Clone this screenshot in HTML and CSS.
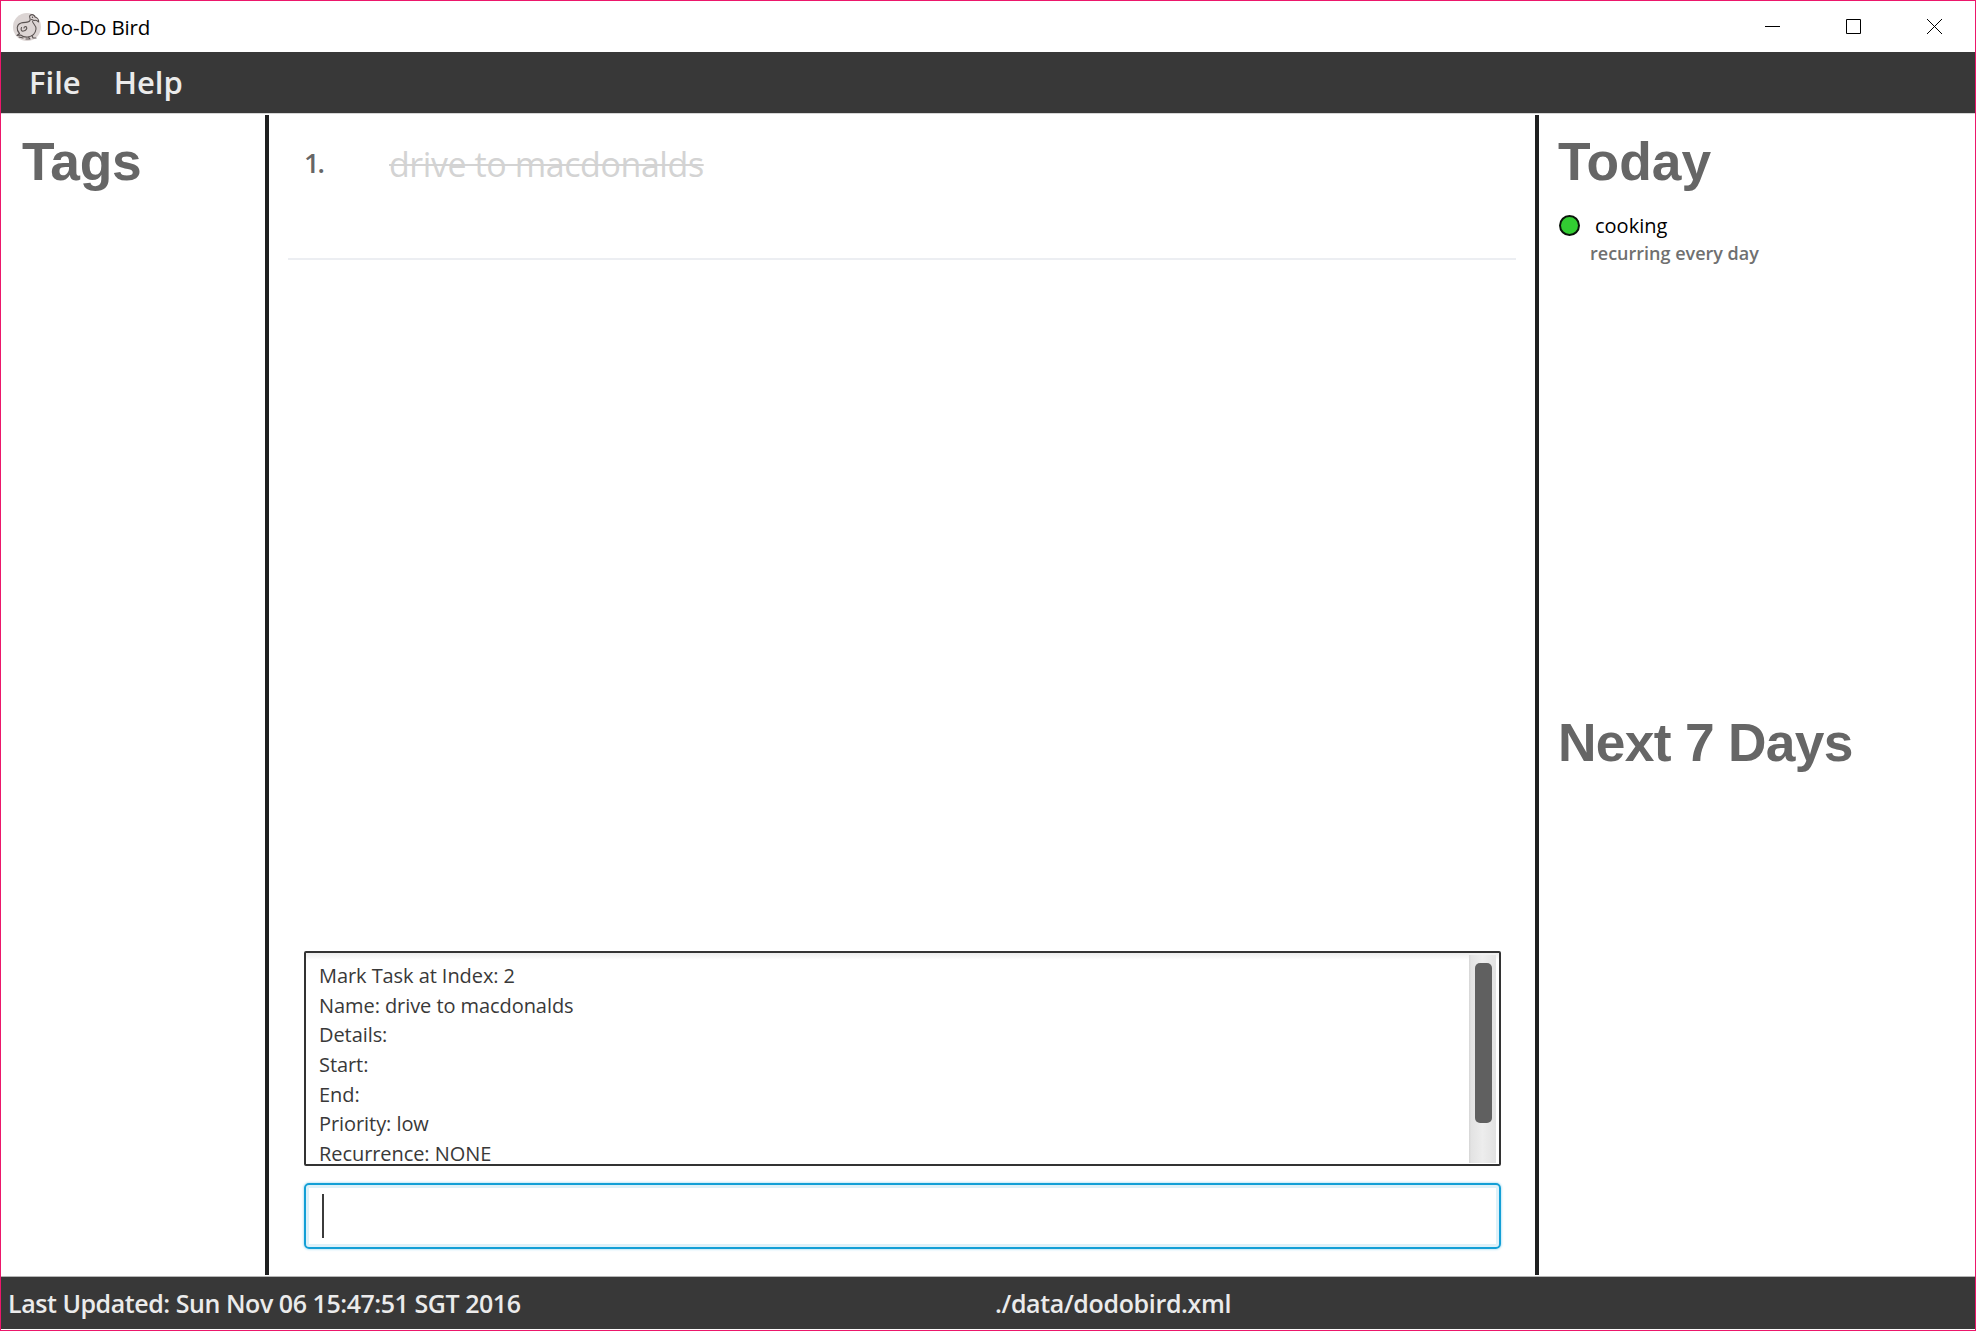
FILE: index.html
```html
<!DOCTYPE html>
<html lang="en">
<head>
<meta charset="utf-8">
<title>Do-Do Bird</title>
<link rel="stylesheet" href="styles.css">
</head>
<body>
<div class="window">
  <header class="titlebar">
    <svg class="logo" viewBox="0 0 28 28" fill="none">
      <circle cx="14" cy="14" r="14" fill="#dcd5d4"/>
      <g stroke="#5a5352" stroke-width="1.1" stroke-linecap="round" stroke-linejoin="round">
        <path d="M6.500 20.500C3 17 3.500 11.500 8 10C12 8.500 15.500 10.500 17 7.500C18 5.500 15.500 4 17 2.500C19 .8 21.500 2 22 4C24 4.500 26 6.500 25.500 9C24.500 7.500 22.500 7 21 7.500L18.500 6.500"/>
        <path d="M19.500 8.500C20 11 23.500 12.500 23 16C22.500 20 20 23 15.500 24C12.500 24.500 9.500 23.500 7.500 22L4 22.500L6.500 20.500"/>
        <path d="M8.500 14.500C7.500 16.500 8.500 18.500 10.500 18C13 17.500 14.500 15.500 13.500 14C12.500 13 11 14 11 15M6 24L10 25M13 26H17L15.500 24M19 22.500L20 25H23"/>
      </g>
      <circle cx="19.500" cy="4.300" r=".7" fill="#4b4645"/>
    </svg>
    <span class="app-name">Do-Do Bird</span>
    <div class="controls">
      <svg viewBox="0 0 15 15"><path d="M0 7.500H15"/></svg>
      <svg viewBox="0 0 15 15"><path d="M.5.5H14.500V14.500H.5Z"/></svg>
      <svg viewBox="0 0 15 15"><path d="M0 0L15 15M15 0L0 15"/></svg>
    </div>
  </header>
  <nav class="menubar"><span>File</span><span>Help</span></nav>
  <main class="panes">
    <aside class="tags"><h1 class="heading">Tags</h1></aside>
    <section class="center">
      <div class="task">
        <span class="index">1.</span>
        <span class="task-name"><span class="task-text">drive to macdonalds</span></span>
      </div>
      <div class="console">
        <div class="log">
          <div>Mark Task at Index: 2</div>
          <div>Name: drive to macdonalds</div>
          <div>Details:</div>
          <div>Start:</div>
          <div>End:</div>
          <div>Priority: low</div>
          <div>Recurrence: NONE</div>
        </div>
        <div class="track"><div class="thumb"></div></div>
      </div>
      <div class="command"><div class="caret"></div></div>
    </section>
    <aside class="agenda">
      <section class="today">
        <h1 class="heading">Today</h1>
        <div class="event"><span class="dot"></span><span class="event-name">cooking</span></div>
        <div class="recurring">recurring every day</div>
      </section>
      <section><h1 class="heading next">Next 7 Days</h1></section>
    </aside>
  </main>
  <footer class="statusbar"><span class="updated">Last Updated: Sun Nov 06 15:47:51 SGT 2016</span><span class="path">./data/dodobird.xml</span></footer>
</div>
</body>
</html>
```
FILE: styles.css
```css
* { box-sizing: border-box; }
body { margin: 0; background: #fff; font-family: "Open Sans", "Noto Sans", sans-serif; }
.window { width: 1976px; height: 1331px; border: 1px solid #ec176b; display: flex; flex-direction: column; overflow: hidden; white-space: nowrap; }
.titlebar { height: 51px; flex: none; display: flex; align-items: center; padding-left: 12px; }
.logo { width: 28px; height: 28px; }
.app-name { font-size: 20.5px; margin-left: 5px; letter-spacing: -.15px; color: #000; }
.controls { margin-left: auto; margin-right: 33px; display: flex; gap: 66px; }
.controls svg { width: 15px; height: 15px; fill: none; stroke: #000; stroke-width: 1; }
.menubar { height: 62px; flex: none; display: flex; align-items: center; gap: 33px; padding: 0 0 1px 28px; background: #383838; border-bottom: 1px solid #d5d5d5; color: #ebebeb; font-size: 31px; font-weight: 600; }
.panes { flex: 1; display: flex; padding: 1px 0; min-height: 0; }
.heading { margin: 0; font: bold 53.33px/60px "Liberation Sans", Arial, sans-serif; color: #666; }
.next { letter-spacing: -.7px; }
.tags { width: 264px; padding: 17px 0 0 21px; }
.tags .heading { letter-spacing: -.3px; }
.center { width: 1274px; border-left: 4px solid #1e1f20; border-right: 4px solid #1e1f20; display: flex; flex-direction: column; padding: 0 34px 26px 35px; }
.task { height: 145px; flex: none; display: flex; margin: 0 -15px 0 -16px; padding: 21px 0 0 16px; border-bottom: 2px solid #eceef2; }
.index { width: 85px; font-size: 27px; line-height: 54px; font-weight: 600; letter-spacing: -2px; color: #666; }
.task-name { font-size: 34px; line-height: 56px; letter-spacing: -.43px; color: #d3d3d3; }
.task-text { text-decoration: line-through; text-decoration-thickness: 2px; }
.console { margin-top: auto; height: 215px; flex: none; border: 2px solid #333; background: linear-gradient(#ececec, #fff 7px); border-radius: 2px; display: flex; justify-content: space-between; padding: 2px 3px 1px 0; overflow: hidden; }
.log { padding: 6px 0 0 13px; font-size: 20px; line-height: 29.67px; letter-spacing: -.07px; color: #393939; }
.track { width: 27px; padding: 8px 4px 0 6px; background: linear-gradient(90deg, #d5d5d5, #e3e3e3 8%, #ededed 50%, #e2e2e2); }
.thumb { height: 160px; background: #606060; border-radius: 5px; }
.command { height: 66px; flex: none; margin-top: 17px; border: 2px solid #139fd6; border-radius: 5px; box-shadow: 0 0 2px 1px #c5e9f7, inset 0 0 0 3px #ddf1f9; padding: 9px 0 0 16px; }
.caret { width: 2px; height: 44px; background: #3b3b3b; }
.agenda { flex: 1; padding: 17px 0 0 19px; }
.today { height: 581px; }
.event { display: flex; align-items: center; height: 28px; margin-top: 19px; }
.dot { width: 21px; height: 21px; margin-left: 1px; border: 2px solid #0a140a; border-radius: 50%; background: #32cd32; }
.event-name { font-size: 20px; margin-left: 15px; color: #000; }
.recurring { font-size: 18px; line-height: 28px; font-weight: 600; color: #707070; padding-left: 32px; }
.statusbar { height: 54px; flex: none; display: flex; align-items: center; background: #383838; border-top: 1px solid #b5b5b5; border-bottom: 1px solid #fff; color: #ebebeb; font-size: 25px; font-weight: 600; padding-left: 7px; }
.updated { width: 987px; letter-spacing: -.45px; }
.path { letter-spacing: -.35px; }
```
